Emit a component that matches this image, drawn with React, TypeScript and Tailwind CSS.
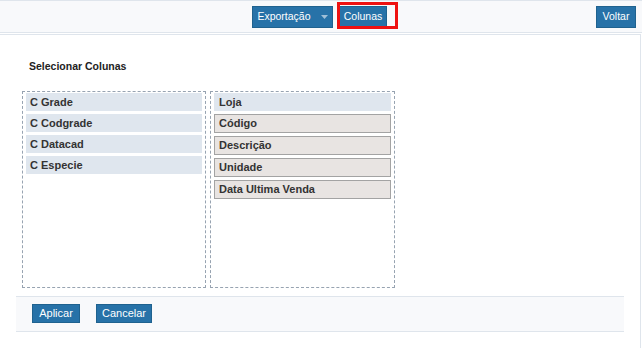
const leftCols = ['C Grade', 'C Codgrade', 'C Datacad', 'C Especie'];
const rightCols = ['Código', 'Descrição', 'Unidade', 'Data Ultima Venda'];

function Btn({ children, w }: { children: React.ReactNode; w: string }) {
  return (
    <button
      className={`${w} h-[22px] bg-[#2772a8] border border-[#1f628f] text-white text-[10.5px] leading-none flex items-center justify-center`}
    >
      {children}
    </button>
  );
}

export default function App() {
  return (
    <div className="w-[642px] h-[348px] bg-white overflow-hidden font-['Liberation_Sans',Arial,sans-serif] text-[#333]">
      {/* Toolbar */}
      <div className="h-[33px] bg-[#f8f9fb] border-t border-b border-[#dfe5ec] flex items-center pl-[252px] pr-[6px]">
        <Btn w="w-[81px]">
          Exportação
          <svg width="7" height="4" viewBox="0 0 7 4" className="ml-[10px]">
            <path d="M0 0h7L3.5 4z" fill="#9fbfd8" />
          </svg>
        </Btn>
        <div className="relative ml-[6px]">
          <Btn w="w-[48px]">Colunas</Btn>
          <div className="absolute -left-[2px] -top-[4px] w-[61px] h-[27px] border-[3px] border-[#ee1111] pointer-events-none" />
        </div>
        <div className="ml-auto">
          <Btn w="w-[40px]">Voltar</Btn>
        </div>
      </div>

      {/* Content */}
      <div className="mt-[1px] h-[320px] border-t border-r border-[#dfe5ec] mr-[1px]">
        <div className="pl-[29px] pt-[24px] text-[10.5px] font-bold text-[#222]">Selecionar Colunas</div>

        <div className="flex gap-[4px] pl-[22px] mt-[16px]">
          <div className="w-[184px] h-[197px] border border-dashed border-[#97a3b1] px-[3px] pt-[1px] flex flex-col gap-[3px]">
            {leftCols.map((c) => (
              <div key={c} className="h-[18px] bg-[#dfe6ee] pl-[4px] flex items-center text-[11px] font-bold">
                {c}
              </div>
            ))}
          </div>
          <div className="w-[185px] h-[197px] border border-dashed border-[#97a3b1] px-[3px] pt-[1px] flex flex-col gap-[3px]">
            <div className="h-[18px] bg-[#dfe6ee] pl-[5px] flex items-center text-[11px] font-bold">Loja</div>
            {rightCols.map((c) => (
              <div
                key={c}
                className="h-[19px] bg-[#e8e4e2] border border-[#a3a3a3] pl-[4px] flex items-center text-[11px] font-bold"
              >
                {c}
              </div>
            ))}
          </div>
        </div>

        {/* Footer */}
        <div className="ml-[16px] w-[608px] mt-[8px] h-[36px] bg-[#f8f9fb] border-t border-b border-[#dfe5ec] flex items-center gap-[16px] pl-[16px]">
          <button className="h-[19px] w-[48px] bg-[#2772a8] border border-[#1f628f] text-white text-[11px] leading-none">
            Aplicar
          </button>
          <button className="h-[19px] w-[56px] bg-[#2772a8] border border-[#1f628f] text-white text-[11px] leading-none">
            Cancelar
          </button>
        </div>
      </div>
    </div>
  );
}
